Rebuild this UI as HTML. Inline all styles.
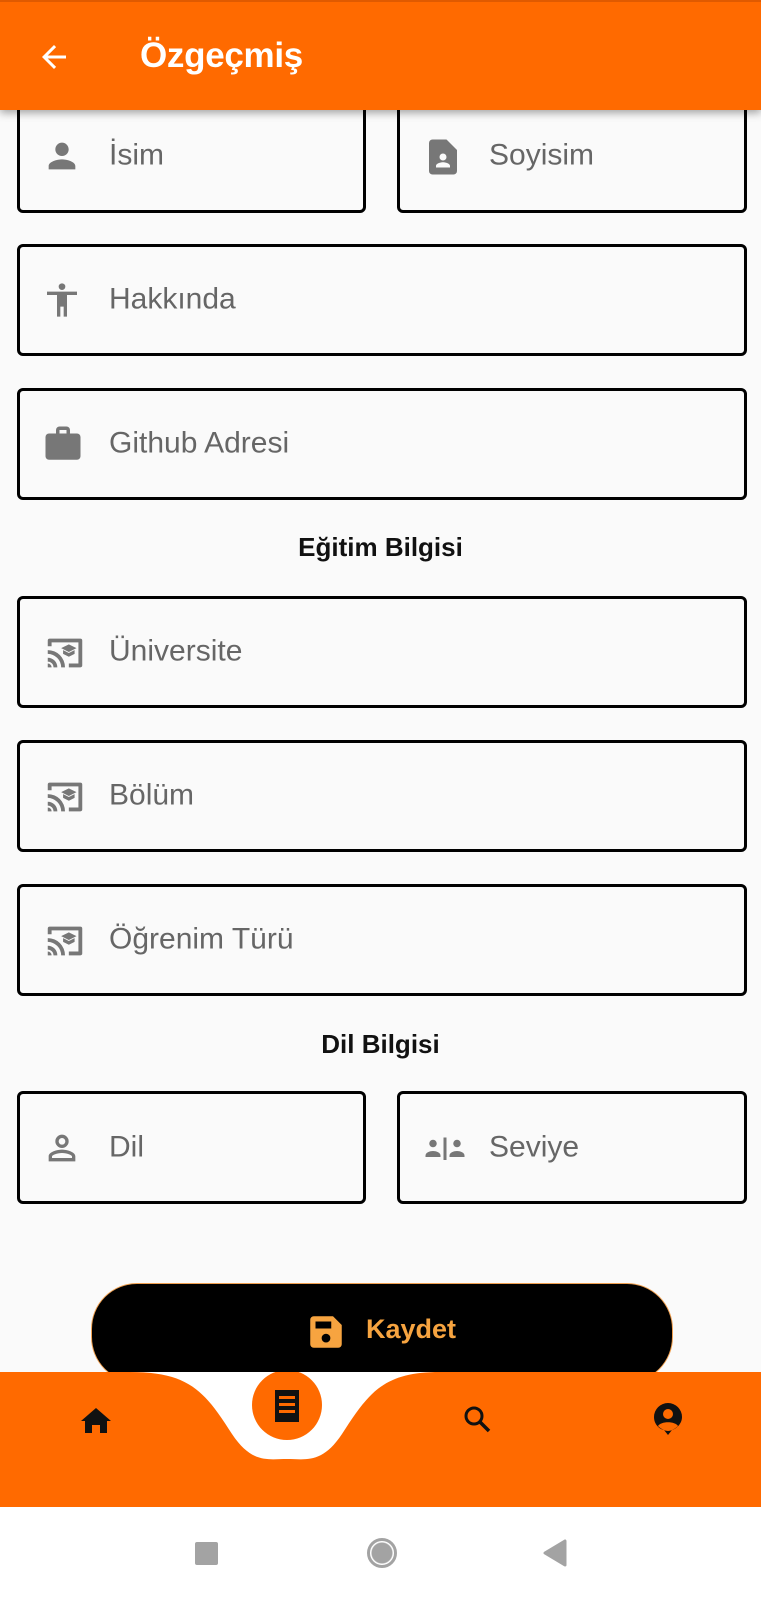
<!DOCTYPE html>
<html><head><meta charset="utf-8"><style>
body{margin:0;width:761px;height:1600px;background:#fafafa;position:relative;overflow:hidden;font-family:"Liberation Sans",Roboto,sans-serif}
.bar{position:absolute;left:0;top:0;width:761px;height:110px;background:#ff6a00;box-shadow:0 3px 8px rgba(0,0,0,.35);z-index:5;border-top:2px solid #e05a00;box-sizing:border-box}
.title{position:absolute;left:140px;top:34px;color:#fff;font-size:35px;font-weight:bold;letter-spacing:-0.3px}
.box{position:absolute;border:3px solid #000;border-radius:6px;box-sizing:border-box}
.lbl{position:absolute;left:89px;top:50%;transform:translateY(-52%);font-size:30px;color:#666}
.ic{position:absolute;left:22px;top:50%;transform:translateY(-50%)}
.h{position:absolute;left:0;width:761px;text-align:center;font-weight:bold;font-size:26px;color:#111}
</style></head><body>
<div class="bar">
<svg style="position:absolute;left:36px;top:37px" width="36" height="36" viewBox="0 0 24 24"><path d="M20 11H7.8l5.6-5.6L12 4l-8 8 8 8 1.4-1.4L7.8 13H20z" fill="#fff"/></svg>
<div class="title">Özgeçmiş</div></div>

<div class="box" style="left:17px;top:100px;width:349px;height:113px"><svg class="ic" style="margin-top:-1px" width="40" height="40" viewBox="0 0 24 24"><path d="M12 12c2.2 0 4-1.8 4-4s-1.8-4-4-4-4 1.8-4 4 1.8 4 4 4zm0 2c-2.7 0-8 1.3-8 4v2h16v-2c0-2.7-5.3-4-8-4z" fill="#777"/></svg><div class="lbl" style="margin-top:-1px">İsim</div></div>
<div class="box" style="left:397px;top:100px;width:350px;height:113px"><svg class="ic" style="margin-top:0" width="42" height="42" viewBox="0 0 24 24"><path d="M6 2h8l6 6v12a2 2 0 0 1-2 2H6a2 2 0 0 1-2-2V4a2 2 0 0 1 2-2zm6 8a2 2 0 1 0 0 4 2 2 0 0 0 0-4zm-4 8h8v-1c0-1.3-2.7-2-4-2s-4 .7-4 2z" fill="#777"/></svg><div class="lbl" style="margin-top:-1px">Soyisim</div></div>

<div class="box" style="left:17px;top:244px;width:730px;height:112px"><svg class="ic" width="40" height="40" viewBox="0 0 24 24"><path d="M12 2a2 2 0 1 1 0 4 2 2 0 0 1 0-4zm9 7h-6v13h-2v-6h-2v6H9V9H3V7h18z" fill="#777"/></svg><div class="lbl">Hakkında</div></div>
<div class="box" style="left:17px;top:388px;width:730px;height:112px"><svg class="ic" width="42" height="42" viewBox="0 0 24 24"><path d="M10 2h4a2 2 0 0 1 2 2v2h4a2 2 0 0 1 2 2v11a2 2 0 0 1-2 2H4a2 2 0 0 1-2-2V8a2 2 0 0 1 2-2h4V4a2 2 0 0 1 2-2zm0 4h4V4h-4z" fill="#777"/></svg><div class="lbl">Github Adresi</div></div>

<div class="h" style="top:532px">Eğitim Bilgisi</div>

<div class="box" style="left:17px;top:596px;width:730px;height:112px"><svg class="ic" width="46" height="46" viewBox="0 0 24 24"><path d="M3 9V6a1 1 0 0 1 1-1h16a1 1 0 0 1 1 1v13a1 1 0 0 1-1 1h-6v-2h5V7H5v2zM3 11a9 9 0 0 1 9 9h-2a7 7 0 0 0-7-7zm0 4a5 5 0 0 1 5 5H6a3 3 0 0 0-3-3zm0 3a2 2 0 0 1 2 2H3zM14 8l4 2-4 2-4-2zm-3 3l3 1.5 3-1.5v2l-3 1.5-3-1.5z" fill="#777"/></svg><div class="lbl">Üniversite</div></div>
<div class="box" style="left:17px;top:740px;width:730px;height:112px"><svg class="ic" width="46" height="46" viewBox="0 0 24 24"><path d="M3 9V6a1 1 0 0 1 1-1h16a1 1 0 0 1 1 1v13a1 1 0 0 1-1 1h-6v-2h5V7H5v2zM3 11a9 9 0 0 1 9 9h-2a7 7 0 0 0-7-7zm0 4a5 5 0 0 1 5 5H6a3 3 0 0 0-3-3zm0 3a2 2 0 0 1 2 2H3zM14 8l4 2-4 2-4-2zm-3 3l3 1.5 3-1.5v2l-3 1.5-3-1.5z" fill="#777"/></svg><div class="lbl">Bölüm</div></div>
<div class="box" style="left:17px;top:884px;width:730px;height:112px"><svg class="ic" width="46" height="46" viewBox="0 0 24 24"><path d="M3 9V6a1 1 0 0 1 1-1h16a1 1 0 0 1 1 1v13a1 1 0 0 1-1 1h-6v-2h5V7H5v2zM3 11a9 9 0 0 1 9 9h-2a7 7 0 0 0-7-7zm0 4a5 5 0 0 1 5 5H6a3 3 0 0 0-3-3zm0 3a2 2 0 0 1 2 2H3zM14 8l4 2-4 2-4-2zm-3 3l3 1.5 3-1.5v2l-3 1.5-3-1.5z" fill="#777"/></svg><div class="lbl">Öğrenim Türü</div></div>

<div class="h" style="top:1029px">Dil Bilgisi</div>

<div class="box" style="left:17px;top:1091px;width:349px;height:113px"><svg class="ic" width="40" height="40" viewBox="0 0 24 24"><path d="M12 4a4 4 0 1 1 0 8 4 4 0 0 1 0-8zm0 2a2 2 0 1 0 0 4 2 2 0 0 0 0-4zm0 7c2.7 0 8 1.3 8 4v3H4v-3c0-2.7 5.3-4 8-4zm0 2c-3 0-6 1.3-6 2v1h12v-1c0-.7-3-2-6-2z" fill="#777"/></svg><div class="lbl">Dil</div></div>
<div class="box" style="left:397px;top:1091px;width:350px;height:113px"><svg class="ic" width="46" height="30" viewBox="0 0 30 20"><circle cx="7" cy="7" r="2.5" fill="#777"/><path d="M2 15c0-2 3-3 5-3s5 1 5 3v1H2z" fill="#777"/><rect x="14" y="3" width="2" height="15" fill="#777"/><circle cx="23" cy="7" r="2.5" fill="#777"/><path d="M18 15c0-2 3-3 5-3s5 1 5 3v1H18z" fill="#777"/></svg><div class="lbl">Seviye</div></div>

<div style="position:absolute;left:91px;top:1283px;width:582px;height:100px;background:#000;border:1.5px solid #f0a050;border-radius:46px;box-sizing:border-box"></div>
<svg style="position:absolute;left:305px;top:1311px" width="42" height="42" viewBox="0 0 24 24"><path d="M5 3h11l5 5v11a2 2 0 0 1-2 2H5a2 2 0 0 1-2-2V5a2 2 0 0 1 2-2zm1 3v4h9V6zm6 7a2.5 2.5 0 1 0 0 5 2.5 2.5 0 0 0 0-5z" fill="#f7a440"/></svg>
<div style="position:absolute;left:366px;top:1314px;font-size:27px;font-weight:bold;color:#f7a440">Kaydet</div>

<svg style="position:absolute;left:0;top:1372px" width="761" height="135" viewBox="0 0 761 135">
<rect width="761" height="135" fill="#ff6a00"/>
<path d="M130,0 C190,0 205,20 232,62 C252,92 268,87 287,87 C306,87 322,92 342,62 C369,20 384,0 440,0 Z" fill="#fff"/>
<circle cx="287" cy="33" r="35" fill="#ff6a00"/>
<path d="M275,18 h24 v32 h-24z" fill="#111"/>
<rect x="279" y="24" width="16" height="3" fill="#ff6a00"/><rect x="279" y="31" width="16" height="3" fill="#ff6a00"/><rect x="279" y="38" width="16" height="3" fill="#ff6a00"/>
<path d="M96,36 l-15,13 h4 v12 h7 v-8 h8 v8 h7 v-12 h4z" fill="#111"/>
<circle cx="474" cy="44" r="8" fill="none" stroke="#111" stroke-width="3"/><path d="M480,50 l9,9" stroke="#111" stroke-width="3.5"/>
<path d="M668,31 a14,14 0 0 1 14,14 c0,7-6,12-10,13 l-4,5-4-5 c-5-1-10-6-10-13 a14,14 0 0 1 14-14z" fill="#111"/>
<circle cx="668" cy="42" r="5" fill="#ff6a00"/><path d="M658,54 c3-5 17-5 20,0 c-3,3-7,5-10,5 s-7-2-10-5z" fill="#ff6a00"/>
</svg>
<div style="position:absolute;left:0;top:1507px;width:761px;height:93px;background:#fff"></div>
<div style="position:absolute;left:195px;top:1542px;width:23px;height:23px;background:#a3a3a3;border-radius:2px"></div>
<div style="position:absolute;left:367px;top:1538px;width:24px;height:24px;border:3px solid #a3a3a3;border-radius:50%;background:radial-gradient(circle,#a3a3a3 0 10px,#fff 11px)"></div>
<svg style="position:absolute;left:542px;top:1539px" width="26" height="28" viewBox="0 0 26 28"><path d="M23,2 L23,26 L3,14 Z" fill="#a3a3a3" stroke="#a3a3a3" stroke-linejoin="round" stroke-width="3"/></svg>
</body></html>
